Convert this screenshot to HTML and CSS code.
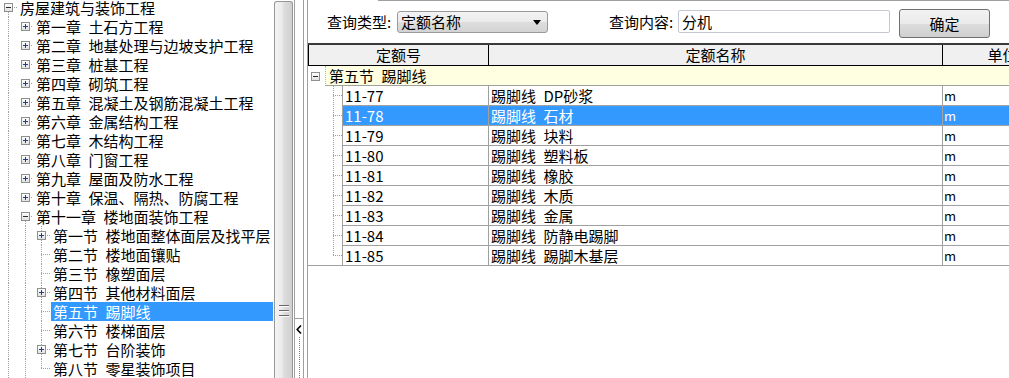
FILE: index.html
```html
<!DOCTYPE html>
<html lang="zh-CN">
<head>
    <meta charset="UTF-8">
    <title>定额查询</title>
    <link rel="stylesheet" href="styles.css">
</head>
<body>
<div class="app">
    <div class="tree">
        <div class="row"><span class="g dh"><i class="box minus"></i></span><span class="label">房屋建筑与装饰工程</span></div>
        <div class="row"><span class="g v"></span><span class="g h"><i class="box plus"></i></span><span class="label">第一章&ensp;土石方工程</span></div>
        <div class="row"><span class="g v"></span><span class="g h"><i class="box plus"></i></span><span class="label">第二章&ensp;地基处理与边坡支护工程</span></div>
        <div class="row"><span class="g v"></span><span class="g h"><i class="box plus"></i></span><span class="label">第三章&ensp;桩基工程</span></div>
        <div class="row"><span class="g v"></span><span class="g h"><i class="box plus"></i></span><span class="label">第四章&ensp;砌筑工程</span></div>
        <div class="row"><span class="g v"></span><span class="g h"><i class="box plus"></i></span><span class="label">第五章&ensp;混凝土及钢筋混凝土工程</span></div>
        <div class="row"><span class="g v"></span><span class="g h"><i class="box plus"></i></span><span class="label">第六章&ensp;金属结构工程</span></div>
        <div class="row"><span class="g v"></span><span class="g h"><i class="box plus"></i></span><span class="label">第七章&ensp;木结构工程</span></div>
        <div class="row"><span class="g v"></span><span class="g h"><i class="box plus"></i></span><span class="label">第八章&ensp;门窗工程</span></div>
        <div class="row"><span class="g v"></span><span class="g h"><i class="box plus"></i></span><span class="label">第九章&ensp;屋面及防水工程</span></div>
        <div class="row"><span class="g v"></span><span class="g h"><i class="box plus"></i></span><span class="label">第十章&ensp;保温、隔热、防腐工程</span></div>
        <div class="row"><span class="g v"></span><span class="g dh"><i class="box minus"></i></span><span class="label">第十一章&ensp;楼地面装饰工程</span></div>
        <div class="row"><span class="g v"></span><span class="g v"></span><span class="g t"><i class="box plus"></i></span><span class="label">第一节&ensp;楼地面整体面层及找平层</span></div>
        <div class="row"><span class="g v"></span><span class="g v"></span><span class="g t"></span><span class="label">第二节&ensp;楼地面镶贴</span></div>
        <div class="row"><span class="g v"></span><span class="g v"></span><span class="g t"></span><span class="label">第三节&ensp;橡塑面层</span></div>
        <div class="row"><span class="g v"></span><span class="g v"></span><span class="g t"><i class="box plus"></i></span><span class="label">第四节&ensp;其他材料面层</span></div>
        <div class="row selected"><span class="g v"></span><span class="g v"></span><span class="g t"></span><span class="label">第五节&ensp;踢脚线</span></div>
        <div class="row"><span class="g v"></span><span class="g v"></span><span class="g t"></span><span class="label">第六节&ensp;楼梯面层</span></div>
        <div class="row"><span class="g v"></span><span class="g v"></span><span class="g t"><i class="box plus"></i></span><span class="label">第七节&ensp;台阶装饰</span></div>
        <div class="row"><span class="g v"></span><span class="g v"></span><span class="g l"></span><span class="label">第八节&ensp;零星装饰项目</span></div>
    </div>

    <div class="vscroll"><div class="thumb"><div class="grip"></div></div></div>

    <div class="splitter">
        <div class="split-btn">
            <svg class="chev" width="6" height="9" viewBox="0 0 6 9"><path d="M5 0.5 L1.2 4.5 L5 8.5" fill="none" stroke="#000" stroke-width="1.6"/></svg>
            <div class="split-dots"></div>
        </div>
    </div>

    <div class="main">
        <div class="query">
            <span class="q-label type-label">查询类型:</span>
            <div class="combo"><span>定额名称</span><i class="arrow"></i></div>
            <span class="q-label content-label">查询内容:</span>
            <div class="text-input">分机</div>
            <div class="btn">确定</div>
        </div>

        <div class="grid">
            <div class="grid-head">
                <div class="hc code">定额号</div>
                <div class="hc name">定额名称</div>
                <div class="hc unit">单位</div>
            </div>
            <div class="grp">
                <div class="gg"><i class="box minus"></i></div>
                <div class="grp-cell">第五节&ensp;踢脚线</div>
            </div>
            <div class="dr"><div class="tg"></div><div class="c code">11-77</div><div class="c name">踢脚线&ensp;DP砂浆</div><div class="c unit">m</div></div>
            <div class="dr sel"><div class="tg"></div><div class="c code">11-78</div><div class="c name">踢脚线&ensp;石材</div><div class="c unit">m</div></div>
            <div class="dr"><div class="tg"></div><div class="c code">11-79</div><div class="c name">踢脚线&ensp;块料</div><div class="c unit">m</div></div>
            <div class="dr"><div class="tg"></div><div class="c code">11-80</div><div class="c name">踢脚线&ensp;塑料板</div><div class="c unit">m</div></div>
            <div class="dr"><div class="tg"></div><div class="c code">11-81</div><div class="c name">踢脚线&ensp;橡胶</div><div class="c unit">m</div></div>
            <div class="dr"><div class="tg"></div><div class="c code">11-82</div><div class="c name">踢脚线&ensp;木质</div><div class="c unit">m</div></div>
            <div class="dr"><div class="tg"></div><div class="c code">11-83</div><div class="c name">踢脚线&ensp;金属</div><div class="c unit">m</div></div>
            <div class="dr"><div class="tg"></div><div class="c code">11-84</div><div class="c name">踢脚线&ensp;防静电踢脚</div><div class="c unit">m</div></div>
            <div class="dr last"><div class="tg"></div><div class="c code">11-85</div><div class="c name">踢脚线&ensp;踢脚木基层</div><div class="c unit">m</div></div>
        </div>
    </div>
</div>
</body>
</html>
```

FILE: styles.css
```css
:root {
    --dv: repeating-linear-gradient(to bottom, #a0a0a0 0 1px, transparent 1px 2px);
    --dh: repeating-linear-gradient(to right, #a0a0a0 0 1px, transparent 1px 2px);
}
body {
    margin: 0;
    width: 1009px;
    height: 378px;
    overflow: hidden;
    background: #fff;
    color: #000;
    font-family: "Noto Sans CJK SC", "DejaVu Sans", sans-serif;
    font-size: 15px;
}
.app {
    display: flex;
    height: 378px;
    overflow: hidden;
}

/* tree */
.tree {
    width: 274px;
    flex: none;
    margin-top: -2px;
}
.row {
    display: flex;
    height: 19px;
    line-height: 19px;
    white-space: nowrap;
}
.g {
    flex: none;
    width: 17px;
    height: 19px;
    display: flex;
    align-items: center;
}
.g:nth-child(2) {
    width: 16px;
}
.g.v {
    background: var(--dv) 8px 0 / 1px 19px no-repeat;
}
.g.h {
    background: var(--dh) 8px 9px / 9px 1px no-repeat;
}
.g.dh {
    background: var(--dv) 8px 10px / 1px 9px no-repeat, var(--dh) 8px 9px / 9px 1px no-repeat;
}
.g.t {
    background: var(--dv) 8px 0 / 1px 19px no-repeat, var(--dh) 8px 9px / 9px 1px no-repeat;
}
.g.l {
    background: var(--dv) 8px 0 / 1px 10px no-repeat, var(--dh) 8px 9px / 9px 1px no-repeat;
}
.box {
    display: block;
    width: 9px;
    height: 9px;
    box-sizing: border-box;
    margin-left: 4px;
    border: 1px solid #8e8f8f;
    background: linear-gradient(#fdfdfd, #e2e2e2);
}
.box.plus {
    background: linear-gradient(#233f86, #233f86) 1px 3px / 5px 1px no-repeat,
                linear-gradient(#233f86, #233f86) 3px 1px / 1px 5px no-repeat,
                linear-gradient(#fdfdfd, #e2e2e2);
}
.box.minus {
    background: linear-gradient(#2b2b2b, #2b2b2b) 1px 3px / 5px 1px no-repeat,
                linear-gradient(#fdfdfd, #e2e2e2);
}
.label {
    margin-left: 1px;
    padding-left: 2px;
}
.row.selected .label {
    flex: 1;
    margin-right: 1px;
    background: #3399ff;
    color: #fff;
}

/* scrollbar + splitter */
.vscroll {
    width: 20px;
    flex: none;
}
.thumb {
    width: 19px;
    height: 377px;
    margin-top: 1px;
    box-sizing: border-box;
    border: 1px solid #979797;
    border-bottom: 0;
    border-radius: 3px 3px 0 0;
    background: linear-gradient(to right, #f4f4f4 0%, #ebebeb 40%, #dcdcdc 55%, #d0d0d0 100%);
}
.grip {
    width: 10px;
    height: 12px;
    margin: 303px 0 0 4px;
    background: repeating-linear-gradient(#686868 0 1px, #fafafa 1px 2px, transparent 2px 5px);
}
.splitter {
    width: 8px;
    flex: none;
    border-left: 1px solid #a0a0a0;
    border-right: 1px solid #a0a0a0;
    margin-right: 3px;
    display: flex;
    flex-direction: column;
}
.split-btn {
    margin-top: 318px;
    flex: 1;
    border-top: 1px solid #a0a0a0;
    display: flex;
    flex-direction: column;
    align-items: center;
}
.chev {
    margin-top: 6px;
}
.split-dots {
    flex: 1;
    margin-top: 3px;
    border-left: 1px dotted #3d8ee6;
}

/* right side */
.main {
    flex: 1;
    min-width: 0;
    overflow: hidden;
    border-left: 1px solid #a0a0a0;
}
.query {
    height: 43px;
    display: flex;
    align-items: flex-start;
    padding-left: 19px;
    background: linear-gradient(#a0a0a0, #a0a0a0) 70px 0 / 100% 1px no-repeat;
}
.q-label {
    margin-top: 11px;
    line-height: 21px;
    white-space: nowrap;
}
.type-label {
    width: 70px;
}
.content-label {
    width: 69px;
    margin-left: 61px;
}
.combo {
    width: 151px;
    height: 22px;
    margin-top: 11px;
    box-sizing: border-box;
    border: 1px solid #9a9a9a;
    border-radius: 3px;
    padding: 0 6px 0 3px;
    display: flex;
    align-items: center;
    justify-content: space-between;
    line-height: 20px;
    background: linear-gradient(#f3f3f3 0%, #ebebeb 50%, #dedede 51%, #d3d3d3 100%);
}
.arrow {
    width: 0;
    height: 0;
    border-left: 4px solid transparent;
    border-right: 4px solid transparent;
    border-top: 5px solid #000;
}
.text-input {
    width: 212px;
    height: 23px;
    margin-top: 10px;
    box-sizing: border-box;
    border: 1px solid #c4c9d4;
    border-radius: 2px;
    padding-left: 3px;
    line-height: 21px;
}
.btn {
    width: 91px;
    height: 29px;
    margin: 9px 0 0 9px;
    box-sizing: border-box;
    border: 1px solid #707070;
    border-radius: 3px;
    text-align: center;
    line-height: 27px;
    background: linear-gradient(#f2f2f2 0%, #ebebeb 50%, #dddddd 51%, #cfcfcf 100%);
}

/* grid */
.grid {
    width: max-content;
}
.grid-head {
    display: flex;
    height: 23px;
    box-sizing: border-box;
    border-top: 2px solid #3a3a3a;
    border-bottom: 1px solid #000;
    background: #f0f0f0;
}
.hc {
    height: 20px;
    line-height: 20px;
    text-align: center;
    box-sizing: border-box;
    border-right: 1px solid #000;
}
.hc.code {
    width: 181px;
    border-left: 1px solid #000;
}
.hc.name {
    width: 454px;
}
.hc.unit {
    width: 120px;
}
.grp {
    display: flex;
    height: 20px;
}
.gg {
    width: 17px;
    flex: none;
    display: flex;
    align-items: center;
}
.gg .box {
    margin-left: 3px;
}
.grp-cell {
    flex: 1;
    box-sizing: border-box;
    border-left: 1px dotted #b8b8b8;
    border-bottom: 1px solid #a0a0a0;
    padding-left: 3px;
    line-height: 19px;
    background: #ffffe1;
}
.dr {
    display: flex;
    height: 20px;
}
.tg {
    width: 34px;
    flex: none;
    background: var(--dv) 25px 0 / 1px 20px no-repeat, var(--dh) 25px 9px / 9px 1px no-repeat;
}
.dr.last .tg {
    box-sizing: border-box;
    border-bottom: 1px solid #a0a0a0;
    background: var(--dv) 25px 0 / 1px 10px no-repeat, var(--dh) 25px 9px / 9px 1px no-repeat;
}
.c {
    height: 20px;
    box-sizing: border-box;
    border-right: 1px solid #a0a0a0;
    border-bottom: 1px solid #a0a0a0;
    padding-left: 2px;
    line-height: 19px;
    white-space: nowrap;
}
.c.code {
    width: 147px;
    border-left: 1px solid #a0a0a0;
}
.c.name {
    width: 454px;
}
.c.unit {
    width: 120px;
    padding-left: 1px;
    font-size: 13px;
}
.dr.sel .c {
    color: #fff;
    background: repeating-linear-gradient(to right, #d9822b 0 1px, transparent 1px 2px) 0 0 / 100% 1px no-repeat,
                repeating-linear-gradient(to right, #d9822b 0 1px, transparent 1px 2px) 0 100% / 100% 1px no-repeat,
                #3399ff;
}
```
